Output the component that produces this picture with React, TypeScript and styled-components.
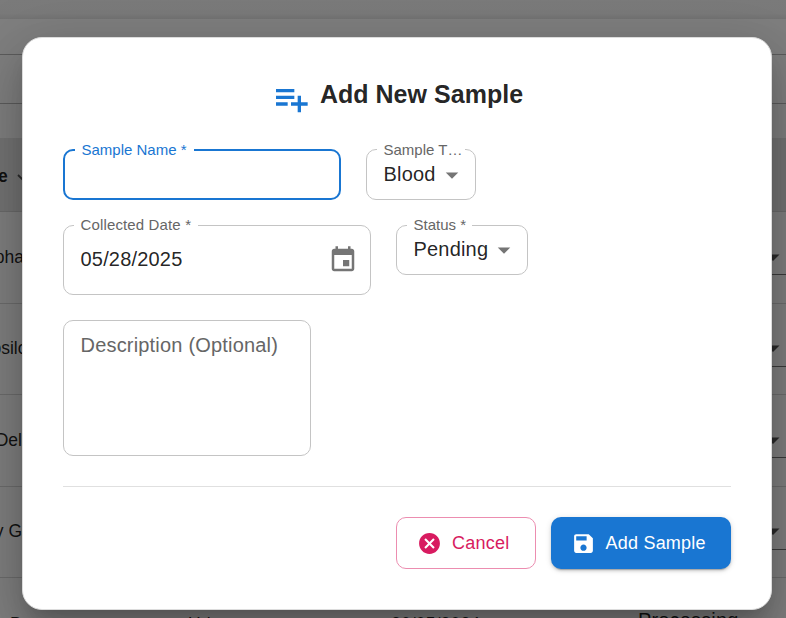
import React from "react";
import styled, { createGlobalStyle, css } from "styled-components";

const GlobalStyle = createGlobalStyle`
  *, *::before, *::after { box-sizing: border-box; }
  html, body { margin: 0; overflow: hidden; }
  body {
    font-family: "Liberation Sans", Arial, sans-serif;
    color: rgba(0, 0, 0, 0.87);
    background: #fff;
  }
`;

const Screen = styled.div`
  position: relative;
  width: 786px;
  height: 618px;
  overflow: hidden;
`;

/* ---------- page behind the dialog ---------- */

const Page = styled.div`
  display: flex;
  flex-direction: column;
  width: 100%;
  height: 100%;
  background: #fff;
`;

const TopBar = styled.div`
  flex: none;
  height: 19px;
  background: linear-gradient(#f6f6f6 0, #f5f5f5 13px, #e6e6e6 19px);
`;

const Strip = styled.div<{ $height: number; $line?: boolean }>`
  flex: none;
  height: ${(p) => p.$height}px;
  border-bottom: ${(p) => (p.$line ? "1px solid #b8b8b8" : "none")};
`;

const TableHead = styled.div`
  flex: none;
  display: flex;
  align-items: center;
  height: 74px;
  padding-top: 3px;
  background: #e6e6e6;
  border-bottom: 1px solid #d4d4d4;
  font-size: 17.5px;
  font-weight: 700;

  span {
    margin-left: -2px;
  }

  svg {
    margin-left: 8px;
  }
`;

const TableRow = styled.div`
  flex: none;
  display: flex;
  align-items: center;
  justify-content: space-between;
  height: 91.5px;
  border-bottom: 1px solid #d9d9d9;
`;

const NameCell = styled.div<{ $end: number }>`
  display: flex;
  justify-content: flex-end;
  width: ${(p) => p.$end}px;
  font-size: 17.5px;
  white-space: nowrap;
`;

const RowSelect = styled.div`
  display: flex;
  align-items: center;
  width: 34px;
  height: 36px;
  padding-top: 2px;
  border-bottom: 1px solid #777;
  color: #555;
`;

const LastRow = styled.div`
  flex: none;
  display: grid;
  grid-template-columns: 178px 203px 247px auto;
  align-items: start;
  padding: 36px 0 0 10px;
  font-size: 17.5px;
  line-height: 20px;
  letter-spacing: 0.16px;
  white-space: nowrap;
`;

const Status = styled.span`
  font-size: 20px;
  margin-top: -4px;
`;

/* ---------- dialog ---------- */

const Backdrop = styled.div`
  position: absolute;
  inset: 0;
  display: flex;
  justify-content: center;
  align-items: flex-start;
  padding: 37px 14px 0 22px;
  background: rgba(0, 0, 0, 0.5);
`;

const Dialog = styled.section`
  width: 750px;
  height: 573px;
  padding: 38px 40px 40px;
  background: #fff;
  border: 1px solid #dcdcdc;
  border-radius: 20px;
  box-shadow:
    0 14px 19px -9px rgba(0, 0, 0, 0.2),
    0 30px 48px 4px rgba(0, 0, 0, 0.14),
    0 11px 58px 10px rgba(0, 0, 0, 0.12);
`;

const Title = styled.h2`
  display: flex;
  justify-content: center;
  margin: 0;
  height: 73px;
  padding-top: 1px;
  font-size: 25px;
  line-height: 34px;
  letter-spacing: 0.03px;
  gap: 9px;

  svg {
    flex: none;
    margin-top: 2px;
    color: #1976d2;
  }
`;

const FieldRow = styled.div`
  display: flex;
  align-items: flex-start;
  gap: 25px;
  margin-bottom: 25px;
`;

const Field = styled.div<{ $width: number; $height: number; $focused?: boolean; $drop?: number }>`
  position: relative;
  flex: none;
  display: flex;
  align-items: center;
  justify-content: space-between;
  width: ${(p) => p.$width}px;
  height: ${(p) => p.$height}px;
  padding: ${(p) => p.$drop ?? 0}px 12px 2px 16.5px;
  border: 1px solid #c4c4c4;
  border-radius: 10px;
  font-size: 20px;
  letter-spacing: 0.19px;
  ${(p) =>
    p.$focused &&
    css`
      border: 2px solid #1976d2;
    `}
`;

const FloatingLabel = styled.label<{
  $left: number;
  $top: number;
  $width: number;
  $focused?: boolean;
  $wide?: boolean;
}>`
  position: absolute;
  left: ${(p) => p.$left}px;
  top: ${(p) => p.$top}px;
  width: ${(p) => p.$width}px;
  padding-left: 6.5px;
  background: #fff;
  font-size: 15px;
  line-height: 18px;
  letter-spacing: ${(p) => (p.$wide ? 0.14 : 0)}px;
  white-space: nowrap;
  color: ${(p) => (p.$focused ? "#1976d2" : "#666")};
`;

const Input = styled.input`
  width: 100%;
  border: 0;
  outline: 0;
  background: transparent;
  font: inherit;
`;

const IconSlot = styled.span<{ $left?: number; $top?: number }>`
  display: flex;
  flex: none;
  margin-left: ${(p) => p.$left ?? 0}px;
  margin-top: ${(p) => p.$top ?? 0}px;
  color: #757575;
`;

const Description = styled.div`
  width: 248px;
  height: 136px;
  padding: 12px 16.5px;
  border: 1px solid #c4c4c4;
  border-radius: 10px;
  font-size: 20px;
  line-height: 24px;
  letter-spacing: 0.19px;
  color: #666;
  white-space: nowrap;
`;

const Actions = styled.footer`
  display: flex;
  justify-content: flex-end;
  gap: 15px;
  margin-top: 30px;
  padding-top: 30px;
  border-top: 1px solid #e0e0e0;
`;

const Button = styled.button<{ $primary?: boolean }>`
  display: flex;
  align-items: center;
  width: ${(p) => (p.$primary ? 180 : 140)}px;
  height: 52px;
  padding: 0 0 0 ${(p) => (p.$primary ? 20 : 19.5)}px;
  gap: ${(p) => (p.$primary ? 9.5 : 10.5)}px;
  border: ${(p) => (p.$primary ? "0" : "1px solid #ec8db0")};
  border-radius: 10px;
  background: ${(p) => (p.$primary ? "#1976d2" : "#fff")};
  color: ${(p) => (p.$primary ? "#fff" : "#d81b60")};
  box-shadow: ${(p) =>
    p.$primary
      ? "0 4px 1px -3px rgba(0,0,0,.2), 0 2px 3px 0 rgba(0,0,0,.14), 0 1px 6px 0 rgba(0,0,0,.12)"
      : "none"};
  font-family: inherit;
  font-size: 18px;
  font-weight: 500;
  letter-spacing: 0.22px;
  line-height: 30px;
  white-space: nowrap;
`;

const paths = {
  playlistAdd:
    "M14 10H3v2h11zm0-4H3v2h11zm4 8v-4h-2v4h-4v2h4v4h2v-4h4v-2zM3 16h7v-2H3z",
  calendar:
    "M17 12h-5v5h5v-5zM16 1v2H8V1H6v2H5c-1.11 0-1.99.9-1.99 2L3 19c0 1.1.89 2 2 2h14c1.1 0 2-.9 2-2V5c0-1.1-.9-2-2-2h-1V1h-2zm3 18H5V8h14v11z",
  cancel:
    "M12 2C6.47 2 2 6.47 2 12s4.47 10 10 10 10-4.47 10-10S17.53 2 12 2m5 13.59L15.59 17 12 13.41 8.41 17 7 15.59 10.59 12 7 8.41 8.41 7 12 10.59 15.59 7 17 8.41 13.41 12z",
  save: "M17 3H5c-1.11 0-2 .9-2 2v14c0 1.1.89 2 2 2h14c1.1 0 2-.9 2-2V7zm-5 16c-1.66 0-3-1.34-3-3s1.34-3 3-3 3 1.34 3 3-1.34 3-3 3m3-10H5V5h10z",
  dropDown: "m7 10 5 5 5-5z",
};

function Icon({ name, size }: { name: keyof typeof paths; size: number }) {
  return (
    <svg width={size} height={size} viewBox="0 0 24 24" fill="currentColor" aria-hidden="true">
      <path d={paths[name]} />
    </svg>
  );
}

const rows = [
  { name: "Alpha", end: 24 },
  { name: "Epsilo", end: 27.5 },
  { name: "Del", end: 22 },
  { name: "y G", end: 22 },
];

export default function App() {
  return (
    <Screen>
      <GlobalStyle />
      <Page>
        <TopBar />
        <Strip $height={36} $line />
        <Strip $height={49} $line />
        <Strip $height={34} />
        <TableHead>
          <span>e</span>
          <svg width="12" height="12" viewBox="0 0 12 12" fill="none" stroke="#555" strokeWidth="1.8">
            <path d="M2 5l5 5 5-5" />
          </svg>
        </TableHead>
        {rows.map((row) => (
          <TableRow key={row.name}>
            <NameCell $end={row.end}>{row.name}</NameCell>
            <RowSelect>
              <svg width="28" height="8" viewBox="0 0 28 8" fill="currentColor">
                <path d="M14.5 0.5h13l-6.500 6.500z" />
              </svg>
            </RowSelect>
          </TableRow>
        ))}
        <LastRow>
          <span>Beta</span>
          <span>Urine</span>
          <span>20/05/2024</span>
          <Status>Processing</Status>
        </LastRow>
      </Page>

      <Backdrop>
        <Dialog role="dialog" aria-labelledby="dialog-title">
          <Title id="dialog-title">
            <Icon name="playlistAdd" size={40} />
            Add New Sample
          </Title>

          <FieldRow>
            <Field $width={278} $height={51} $focused>
              <FloatingLabel $left={10} $top={-10} $width={119} $focused>
                Sample Name *
              </FloatingLabel>
              <Input aria-label="Sample Name" />
            </Field>
            <Field $width={110} $height={51} $drop={2}>
              <FloatingLabel $left={10} $top={-9} $width={88}>
                Sample T…
              </FloatingLabel>
              <span>Blood</span>
              <IconSlot $left={1.5}>
                <Icon name="dropDown" size={30} />
              </IconSlot>
            </Field>
          </FieldRow>

          <FieldRow>
            <Field $width={308} $height={70}>
              <FloatingLabel $left={10} $top={-10} $width={124} $wide>
                Collected Date *
              </FloatingLabel>
              <span>05/28/2025</span>
              <IconSlot $top={1}>
                <Icon name="calendar" size={30} />
              </IconSlot>
            </Field>
            <Field $width={132} $height={50}>
              <FloatingLabel $left={10} $top={-10} $width={65}>
                Status *
              </FloatingLabel>
              <span>Pending</span>
              <IconSlot $left={0.5} $top={2}>
                <Icon name="dropDown" size={30} />
              </IconSlot>
            </Field>
          </FieldRow>

          <Description>Description (Optional)</Description>

          <Actions>
            <Button type="button">
              <Icon name="cancel" size={25} />
              Cancel
            </Button>
            <Button type="button" $primary>
              <Icon name="save" size={25} />
              Add Sample
            </Button>
          </Actions>
        </Dialog>
      </Backdrop>
    </Screen>
  );
}
